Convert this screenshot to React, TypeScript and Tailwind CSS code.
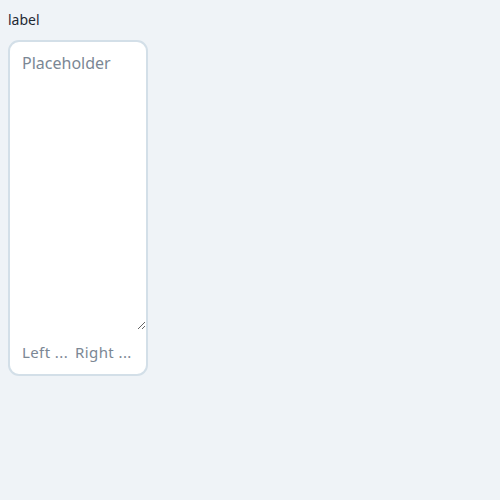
export default function App() {
  return (
    <div className="min-h-[500px] bg-[#eff3f7] p-2 font-['Noto_Sans',sans-serif]">
      <label className="block text-sm text-[#1f2933] mt-[2px] mb-[10px]">label</label>
      <div className="w-[140px] rounded-[11px] border-2 border-[#d3dfe8] bg-white overflow-hidden">
        <textarea
          className="block w-full h-[288px] px-3 pt-[9px] pb-2 text-base text-[#1f2933] placeholder-[#7b8794] outline-none"
          placeholder="Placeholder"
        />
        <div className="flex gap-[7px] px-3 pt-[11px] pb-[10px] text-[15px] tracking-[0.4px] text-[#7b8794]">
          <span>Left ...</span>
          <span>Right ...</span>
        </div>
      </div>
    </div>
  );
}
